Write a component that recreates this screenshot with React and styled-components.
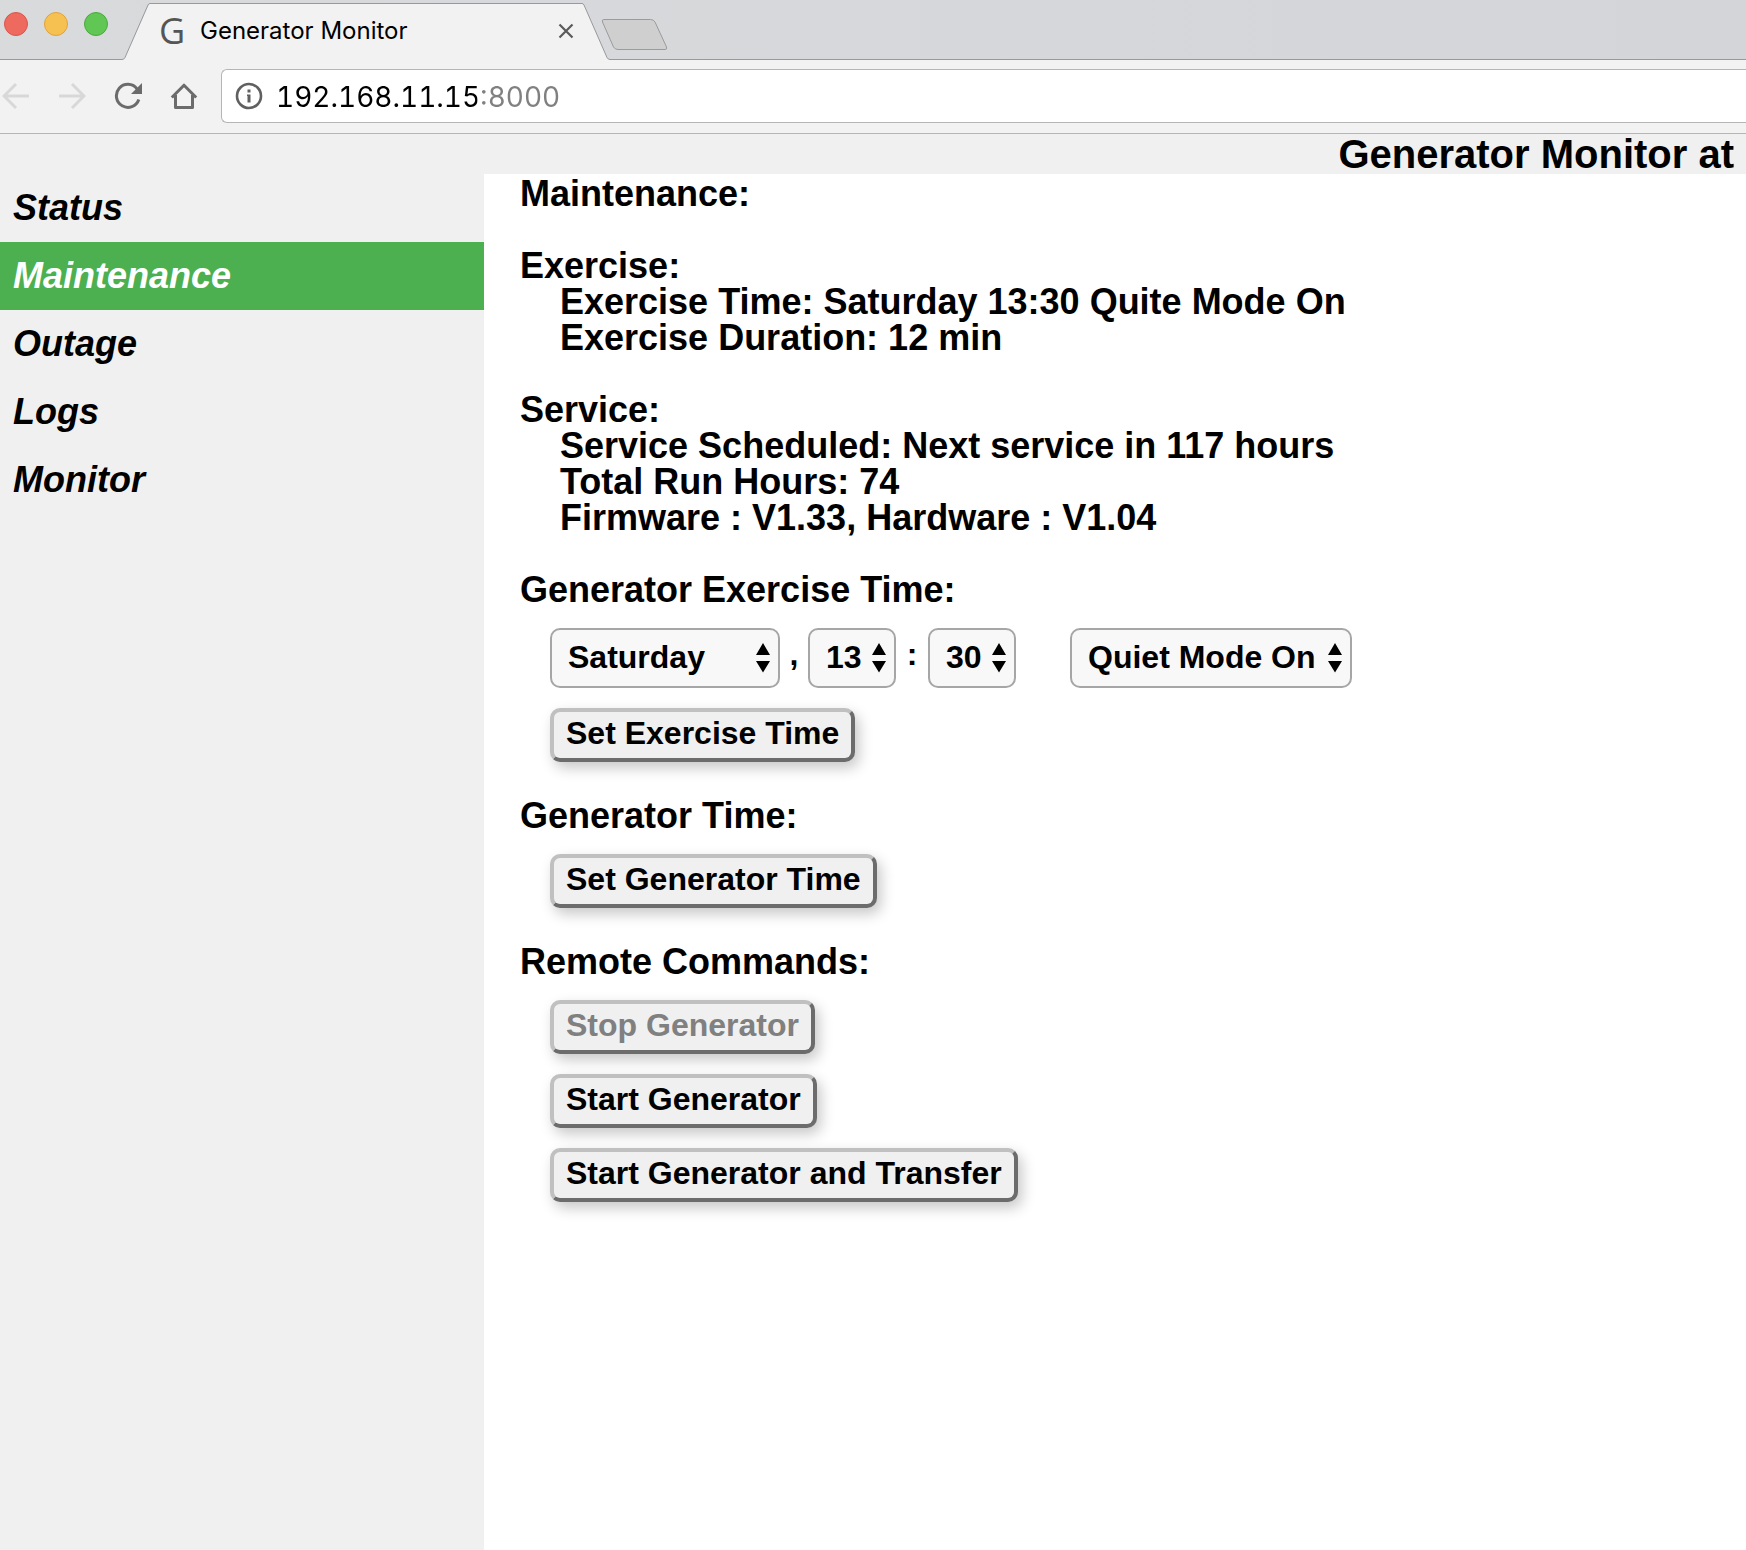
import React, { useState } from "react";
import styled, { createGlobalStyle } from "styled-components";

const GlobalStyle = createGlobalStyle`
  *, *::before, *::after { box-sizing: border-box; }
  body {
    margin: 0;
    background: #fff;
    color: #000;
    font-family: "Liberation Sans", Arial, sans-serif;
  }
`;

const Window = styled.div`
  display: flex;
  flex-direction: column;
  min-height: 100vh;
`;

/* ---------- browser chrome ---------- */

const TabStrip = styled.header`
  display: flex;
  height: 60px;
  padding-left: 4px;
  background: linear-gradient(to right, #d9dadc, #d4d5d9);
  box-shadow: inset 0 -1px #98999b;
`;

const WindowControls = styled.div`
  display: flex;
  gap: 16px;
  padding: 12px 14px 0 0;
`;

const ControlDot = styled.button`
  width: 24px;
  height: 24px;
  padding: 0;
  border: 1px solid ${(p) => p.$edge};
  border-radius: 50%;
  background: ${(p) => p.$fill};
`;

const Tab = styled.div`
  display: flex;
  align-self: flex-end;
  height: 57px;
`;

const TabEdge = styled.svg`
  display: block;
  width: 28px;
  height: 57px;
`;

const TabBody = styled.div`
  display: flex;
  align-items: center;
  width: 432px;
  padding: 0 8px 2px 9px;
  border-top: 1px solid #98999b;
  background: #f2f2f2;
`;

const Favicon = styled.span`
  width: 41px;
  color: #555;
  font: 36px/40px "Open Sans", sans-serif;
`;

const TabTitle = styled.span`
  flex: 1;
  font: 24px/32px Inter, sans-serif;
  white-space: nowrap;
`;

const IconButton = styled.button`
  display: block;
  padding: 0;
  border: 0;
  background: none;
  color: ${(p) => p.$color || "#6b6b6b"};
  line-height: 0;
`;

const NewTabButton = styled(IconButton)`
  margin: 18px 0 0 -9px;
  align-self: flex-start;
`;

const Toolbar = styled.div`
  display: flex;
  align-items: center;
  height: 74px;
  padding-bottom: 2px;
  border-bottom: 1px solid #b5b5b5;
  background: #f2f2f2;
`;

const ToolbarButtons = styled.nav`
  display: flex;
  gap: 28px;
  padding: 0 23px 0 2px;
`;

const AddressBar = styled.label`
  display: flex;
  flex: 1;
  align-items: center;
  gap: 13px;
  height: 54px;
  padding-left: 13px;
  border: 1px solid #b5b5b5;
  border-right: 0;
  border-radius: 6px 0 0 6px;
  background: #fff;
  color: #606060;
`;

const AddressInput = styled.input`
  flex: 1;
  min-width: 0;
  padding: 2px 0 0;
  border: 0;
  outline: 0;
  background: linear-gradient(to right, #000 201px, #808080 201px);
  background-clip: text;
  -webkit-text-fill-color: transparent;
  font: 28px/36px Inter, sans-serif;
  font-variant-numeric: tabular-nums;
`;

/* ---------- page ---------- */

const PageHeader = styled.h1`
  margin: 0;
  padding-right: 12px;
  background: #f0f0f0;
  font-size: 40px;
  line-height: 40px;
  text-align: right;
`;

const Columns = styled.div`
  display: flex;
  flex: 1;
`;

const Sidebar = styled.nav`
  flex: 0 0 484px;
  background: #f0f0f0;
`;

const NavLink = styled.a`
  display: block;
  padding: 16px 13px;
  background: ${(p) => (p.$active ? "#4caf50" : "transparent")};
  color: ${(p) => (p.$active ? "#fff" : "#000")};
  font-size: 36px;
  font-style: italic;
  font-weight: bold;
  line-height: 36px;
  text-decoration: none;
`;

const Main = styled.main`
  flex: 1;
  padding: 2px 36px;
  font-size: 36px;
  font-weight: bold;
  line-height: 36px;
`;

const Heading = styled.h2`
  margin: 0;
  font-size: 36px;
  line-height: 36px;
`;

const Readout = styled.section`
  margin: 0 0 36px;
`;

const Detail = styled.p`
  margin: 0;
  padding-left: 40px;
`;

const ControlGroup = styled.section`
  margin-bottom: 36px;
`;

const Controls = styled.div`
  display: flex;
  flex-direction: column;
  align-items: flex-start;
  gap: 20px;
  padding: 20px 0 0 30px;
  font-size: 32px;
`;

const TimeRow = styled.div`
  display: flex;
  align-items: center;
`;

const Separator = styled.span`
  width: ${(p) => p.$width};
  padding-bottom: 8px;
  text-align: center;
`;

const SelectBox = styled.label`
  position: relative;
  width: ${(p) => p.$width};
  height: 60px;
  margin-left: ${(p) => p.$gap || "0"};
`;

const SelectField = styled.select`
  appearance: none;
  width: 100%;
  height: 100%;
  padding: 0 16px 2px;
  border: 2px solid #a6a6a6;
  border-radius: 10px;
  background: #f8f8f8;
  color: #000;
  font: bold 32px "Liberation Sans", Arial, sans-serif;
`;

const SelectArrows = styled.svg`
  position: absolute;
  top: 15px;
  right: 10px;
  width: 14px;
  height: 30px;
  pointer-events: none;
`;

const ActionButton = styled.button`
  padding: 2px 12px 6px;
  border: 4px solid;
  border-color: #c0c0c0 #6c6c6c #6c6c6c #c0c0c0;
  border-radius: 10px;
  background: #f0f0f0;
  box-shadow: 4px 6px 14px rgba(0, 0, 0, 0.22);
  color: #000;
  font: bold 32px/38px "Liberation Sans", Arial, sans-serif;

  &:disabled {
    color: #808080;
  }
`;

const NAV = ["Status", "Maintenance", "Outage", "Logs", "Monitor"];
const DAYS = ["Sunday", "Monday", "Tuesday", "Wednesday", "Thursday", "Friday", "Saturday"];
const pad = (n) => String(n).padStart(2, "0");
const HOURS = Array.from({ length: 24 }, (_, i) => pad(i));
const MINUTES = Array.from({ length: 60 }, (_, i) => pad(i));
const MODES = ["Quiet Mode On", "Quiet Mode Off"];

function Select({ label, options, initial, width, gap }) {
  const [value, setValue] = useState(initial);
  return (
    <SelectBox $width={width} $gap={gap}>
      <SelectField aria-label={label} value={value} onChange={(e) => setValue(e.target.value)}>
        {options.map((o) => (
          <option key={o}>{o}</option>
        ))}
      </SelectField>
      <SelectArrows viewBox="0 0 14 30" aria-hidden="true">
        <path d="M7 0 14 12H0zM7 29.500 0 18h14z" />
      </SelectArrows>
    </SelectBox>
  );
}

function ArrowIcon({ forward }) {
  return (
    <svg width="28" height="28" viewBox="0 0 28 28" fill="none" stroke="currentColor" strokeWidth="3">
      <path d={forward ? "M1 14H26M14 2 26 14 14 26" : "M27 14H2M14 2 2 14 14 26"} />
    </svg>
  );
}

function ReloadIcon() {
  return (
    <svg width="28" height="28" viewBox="0 0 28 28">
      <path d="M24.800 17.500A11.500 11.500 0 1 1 23 6.800" fill="none" stroke="currentColor" strokeWidth="3" />
      <path d="M28 1V12H17z" fill="currentColor" />
    </svg>
  );
}

function HomeIcon() {
  return (
    <svg width="28" height="28" viewBox="0 0 28 28" fill="none" stroke="currentColor" strokeWidth="3">
      <path d="M1.800 15.500 14 3.200 26.200 15.500M5.500 13V25.500H22.500V13" strokeLinejoin="round" />
    </svg>
  );
}

function InfoIcon() {
  return (
    <svg width="28" height="28" viewBox="0 0 28 28">
      <circle cx="14" cy="14" r="12" fill="none" stroke="currentColor" strokeWidth="2.600" />
      <path d="M12.500 7.500h3v3h-3zM12 12.500h3.500v8h-3v-6.500h-.5z" fill="currentColor" />
    </svg>
  );
}

export default function App() {
  const [page, setPage] = useState("Maintenance");
  const [address, setAddress] = useState("192.168.11.15:8000");

  return (
    <Window>
      <GlobalStyle />
      <TabStrip>
        <WindowControls>
          <ControlDot aria-label="Close window" $fill="#ee6a5f" $edge="#d8554b" />
          <ControlDot aria-label="Minimize window" $fill="#f7c152" $edge="#dfa33c" />
          <ControlDot aria-label="Zoom window" $fill="#60c755" $edge="#4aa93f" />
        </WindowControls>
        <Tab>
          <TabEdge viewBox="0 0 28 57" aria-hidden="true">
            <path d="M0 57H28V0.500C27.500 0.500 27 1 26.500 2L3 54.500Q2 56.500 0 56.500" fill="#f2f2f2" />
            <path d="M0 56.500Q2 56.500 3 54.500L26 2Q26.700 0.500 28 0.500" fill="none" stroke="#98999b" />
          </TabEdge>
          <TabBody>
            <Favicon aria-hidden="true">G</Favicon>
            <TabTitle>Generator Monitor</TabTitle>
            <IconButton aria-label="Close tab" $color="#5a5a5a">
              <svg width="16" height="16" viewBox="0 0 16 16" fill="none" stroke="currentColor" strokeWidth="2.200">
                <path d="M1.500 1.500 14.500 14.500M14.500 1.500 1.500 14.500" />
              </svg>
            </IconButton>
          </TabBody>
          <TabEdge viewBox="0 0 28 57" aria-hidden="true">
            <path d="M28 57H0V0.500Q1.300 0.500 2 2L25 54.500Q26 56.500 28 56.500" fill="#f2f2f2" />
            <path d="M28 56.500Q26 56.500 25 54.500L2 2Q1.300 0.500 0 0.500" fill="none" stroke="#98999b" />
          </TabEdge>
        </Tab>
        <NewTabButton aria-label="New tab">
          <svg width="68" height="34" viewBox="0 0 68 34">
            <path
              d="M3 1.500H49.500Q52.500 1.500 54 4L65.500 29Q66.500 31.500 64 31.500H17Q14 31.500 12.500 29L1.500 4Q0.500 1.500 3 1.500z"
              fill="#cfcfcf"
              stroke="#9b9b9c"
            />
          </svg>
        </NewTabButton>
      </TabStrip>

      <Toolbar>
        <ToolbarButtons aria-label="Browser">
          <IconButton aria-label="Back" $color="#d8d8d8"><ArrowIcon /></IconButton>
          <IconButton aria-label="Forward" $color="#d8d8d8"><ArrowIcon forward /></IconButton>
          <IconButton aria-label="Reload"><ReloadIcon /></IconButton>
          <IconButton aria-label="Home"><HomeIcon /></IconButton>
        </ToolbarButtons>
        <AddressBar>
          <InfoIcon />
          <AddressInput
            aria-label="Address"
            value={address}
            onChange={(e) => setAddress(e.target.value)}
          />
        </AddressBar>
      </Toolbar>

      <PageHeader>Generator Monitor at</PageHeader>
      <Columns>
        <Sidebar aria-label="Pages">
          {NAV.map((name) => (
            <NavLink
              key={name}
              href={`#${name.toLowerCase()}`}
              $active={name === page}
              onClick={() => setPage(name)}
            >
              {name}
            </NavLink>
          ))}
        </Sidebar>

        <Main>
          <Readout>
            <Heading>Maintenance:</Heading>
          </Readout>
          <Readout>
            <Heading>Exercise:</Heading>
            <Detail>Exercise Time: Saturday 13:30 Quite Mode On</Detail>
            <Detail>Exercise Duration: 12 min</Detail>
          </Readout>
          <Readout>
            <Heading>Service:</Heading>
            <Detail>Service Scheduled: Next service in 117 hours</Detail>
            <Detail>Total Run Hours: 74</Detail>
            <Detail>Firmware : V1.33, Hardware : V1.04</Detail>
          </Readout>

          <ControlGroup>
            <Heading>Generator Exercise Time:</Heading>
            <Controls>
              <TimeRow>
                <Select label="Exercise day" options={DAYS} initial="Saturday" width="230px" />
                <Separator $width="28px">,</Separator>
                <Select label="Exercise hour" options={HOURS} initial="13" width="88px" />
                <Separator $width="32px">:</Separator>
                <Select label="Exercise minute" options={MINUTES} initial="30" width="88px" />
                <Select label="Quiet mode" options={MODES} initial="Quiet Mode On" width="282px" gap="54px" />
              </TimeRow>
              <ActionButton>Set Exercise Time</ActionButton>
            </Controls>
          </ControlGroup>

          <ControlGroup>
            <Heading>Generator Time:</Heading>
            <Controls>
              <ActionButton>Set Generator Time</ActionButton>
            </Controls>
          </ControlGroup>

          <ControlGroup>
            <Heading>Remote Commands:</Heading>
            <Controls>
              <ActionButton disabled>Stop Generator</ActionButton>
              <ActionButton>Start Generator</ActionButton>
              <ActionButton>Start Generator and Transfer</ActionButton>
            </Controls>
          </ControlGroup>
        </Main>
      </Columns>
    </Window>
  );
}
